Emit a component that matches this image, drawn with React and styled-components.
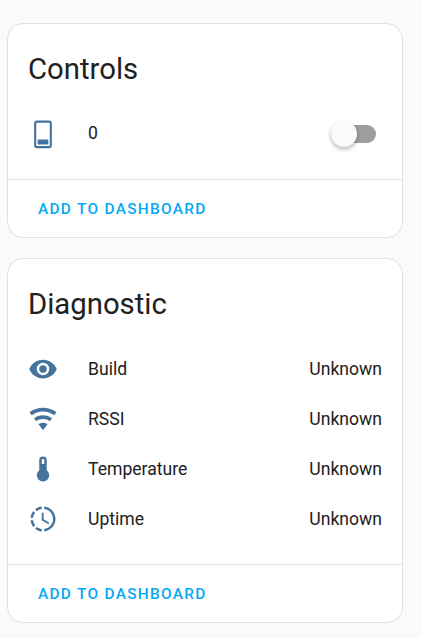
import React from "react";
import styled, { createGlobalStyle } from "styled-components";

const paths = {
  phone:
    "M7 1.2H17A2.1 2.1 0 0 1 19.1 3.3V21.2A2.1 2.1 0 0 1 17 23.3H7A2.1 2.1 0 0 1 4.9 21.2V3.3A2.1 2.1 0 0 1 7 1.2M7 3A.4.4 0 0 0 6.6 3.4V21.1A.4.4 0 0 0 7 21.5H17A.4.4 0 0 0 17.4 21.1V3.4A.4.4 0 0 0 17 3H7M8.2 16.4H15.8A.5.5 0 0 1 16.3 16.9V19.8A.5.5 0 0 1 15.8 20.3H8.2A.5.5 0 0 1 7.7 19.8V16.9A.5.5 0 0 1 8.2 16.4Z",
  eye: "M12,9A3,3 0 0,0 9,12A3,3 0 0,0 12,15A3,3 0 0,0 15,12A3,3 0 0,0 12,9M12,17A5,5 0 0,1 7,12A5,5 0 0,1 12,7A5,5 0 0,1 17,12A5,5 0 0,1 12,17M12,4.5C7,4.5 2.73,7.61 1,12C2.73,16.39 7,19.5 12,19.5C17,19.5 21.27,16.39 23,12C21.27,7.61 17,4.5 12,4.5Z",
  wifi: "M12,21L15.6,16.2C14.6,15.45 13.35,15 12,15C10.65,15 9.4,15.45 8.4,16.2L12,21M12,3C7.95,3 4.21,4.34 1.2,6.6L3,9C5.5,7.12 8.62,6 12,6C15.38,6 18.5,7.12 21,9L22.8,6.6C19.79,4.34 16.05,3 12,3M12,9C9.3,9 6.81,9.89 4.8,11.4L6.6,13.8C8.1,12.67 9.97,12 12,12C14.03,12 15.9,12.67 17.4,13.8L19.2,11.4C17.19,9.89 14.7,9 12,9Z",
  thermometer:
    "M15 13V5A3 3 0 0 0 9 5V13A5 5 0 1 0 15 13M12 4A1 1 0 0 1 13 5V8H11V5A1 1 0 0 1 12 4Z",
  clock:
    "M13,2.03V2.05L13,4.05C17.39,4.59 20.5,8.58 19.96,12.97C19.5,16.61 16.64,19.5 13,19.93V21.93C18.5,21.38 22.5,16.5 21.95,11C21.5,6.25 17.73,2.5 13,2.03M11,2.06C9.05,2.25 7.19,3 5.67,4.26L7.1,5.74C8.22,4.84 9.57,4.26 11,4.06V2.06M4.26,5.67C3,7.19 2.25,9.04 2.05,11H4.05C4.24,9.58 4.8,8.23 5.69,7.1L4.26,5.67M2.06,13C2.26,14.96 3.03,16.81 4.27,18.33L5.69,16.9C4.81,15.77 4.24,14.42 4.06,13H2.06M7.1,18.37L5.67,19.74C7.18,21 9.04,21.79 11,22V20C9.58,19.82 8.23,19.25 7.1,18.37M12.5,7V12.25L17,14.92L16.25,16.15L11,13V7H12.5Z",
};

const diagnostics = [
  { icon: "eye", name: "Build" },
  { icon: "wifi", name: "RSSI" },
  { icon: "thermometer", name: "Temperature" },
  { icon: "clock", name: "Uptime" },
];

const Icon = ({ name }) => (
  <IconSvg viewBox="0 0 24 24">
    <path fillRule="evenodd" d={paths[name]} />
  </IconSvg>
);

const App = () => (
  <Page>
    <GlobalStyle />
    <Card>
      <Title>Controls</Title>
      <ControlBody>
        <Row>
          <Icon name="phone" />
          <ControlName>0</ControlName>
          <Switch>
            <Track />
            <Thumb />
          </Switch>
        </Row>
      </ControlBody>
      <Actions>
        <ActionButton>ADD TO DASHBOARD</ActionButton>
      </Actions>
    </Card>
    <Card>
      <Title>Diagnostic</Title>
      <DiagnosticBody>
        {diagnostics.map((item) => (
          <Row key={item.name}>
            <Icon name={item.icon} />
            <Name>{item.name}</Name>
            <Value>Unknown</Value>
          </Row>
        ))}
      </DiagnosticBody>
      <Actions>
        <ActionButton>ADD TO DASHBOARD</ActionButton>
      </Actions>
    </Card>
  </Page>
);

const GlobalStyle = createGlobalStyle`
  html, body {
    margin: 0;
    background: #fafafa;
    font-family: Roboto, "Liberation Sans", sans-serif;
    color: #212121;
  }
`;

const Page = styled.div`
  display: flex;
  flex-direction: column;
  gap: 20px;
  width: 396px;
  padding: 23px 0 14px 7px;
`;

const Card = styled.section`
  background: #fff;
  border: 1px solid #e0e0e0;
  border-radius: 16px;
`;

const Title = styled.h2`
  margin: 0;
  padding: 25px 20px 0;
  font-size: 29.3px;
  font-weight: 400;
  line-height: 40px;
`;

const ControlBody = styled.div`
  padding: 25px 20px 25px;
`;

const DiagnosticBody = styled.div`
  display: flex;
  flex-direction: column;
  gap: 10px;
  padding: 25px 20px 25px;
`;

const Row = styled.div`
  display: flex;
  align-items: center;
  height: 40px;
`;

const IconSvg = styled.svg`
  width: 30px;
  height: 30px;
  flex: none;
  fill: #44739e;
`;

const Name = styled.span`
  flex: 1;
  margin-left: 30px;
  font-size: 17.6px;
  line-height: 24px;
`;

const ControlName = styled(Name)`
  margin-bottom: 3px;
`;

const Value = styled.span`
  font-size: 17.6px;
  line-height: 24px;
`;

const Switch = styled.div`
  position: relative;
  width: 45px;
  height: 26px;
  margin-right: 6px;
`;

const Track = styled.div`
  position: absolute;
  top: 4px;
  right: 0;
  width: 35px;
  height: 18px;
  border-radius: 9px;
  background: #9e9e9e;
`;

const Thumb = styled.div`
  position: absolute;
  top: 0;
  left: 0;
  width: 26px;
  height: 26px;
  border-radius: 50%;
  background: #fafafa;
  box-shadow: 0 2px 4px rgba(0, 0, 0, 0.3);
`;

const Actions = styled.div`
  padding: 8px 10px;
  border-top: 1px solid #e0e0e0;
`;

const ActionButton = styled.button`
  height: 41px;
  padding: 0 20px;
  border: none;
  background: none;
  color: #03a9f4;
  font-family: inherit;
  font-size: 15.4px;
  font-weight: 500;
  letter-spacing: 1.3px;
`;

export default App;
